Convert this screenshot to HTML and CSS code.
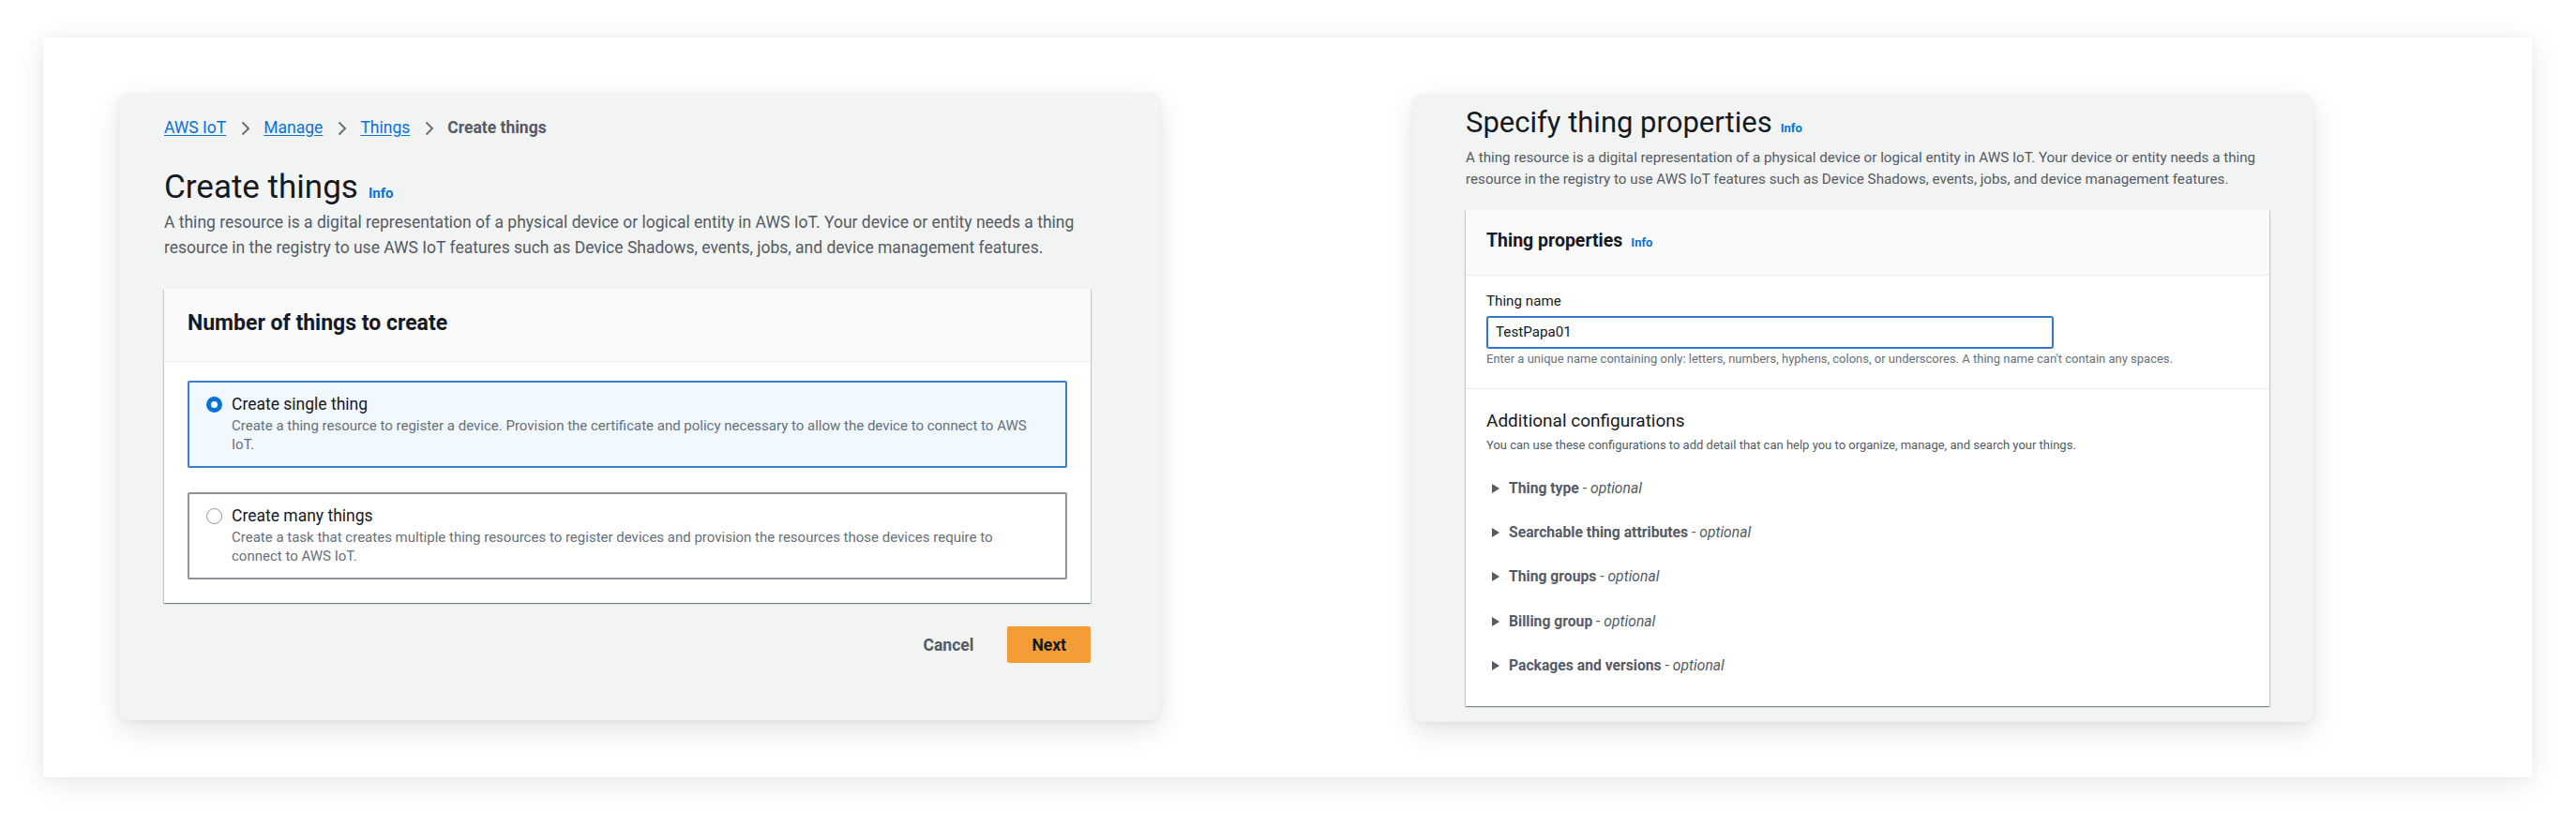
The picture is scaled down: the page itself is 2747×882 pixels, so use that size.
FILE: index.html
```html
<!DOCTYPE html>
<html lang="en">
<head>
<meta charset="utf-8">
<title>AWS IoT - Create things</title>
<link rel="stylesheet" href="styles.css">
</head>
<body>
<div class="panel">
  <section class="card card-left">
    <nav class="crumbs">
      <a href="#">AWS IoT</a>
      <svg class="chev" viewBox="0 0 11 16"><polyline points="2.5,1.5 9,8 2.5,14.5"/></svg>
      <a href="#">Manage</a>
      <svg class="chev" viewBox="0 0 11 16"><polyline points="2.5,1.5 9,8 2.5,14.5"/></svg>
      <a href="#">Things</a>
      <svg class="chev" viewBox="0 0 11 16"><polyline points="2.5,1.5 9,8 2.5,14.5"/></svg>
      <span class="current">Create things</span>
    </nav>
    <h1 class="title">Create things<a class="info" href="#">Info</a></h1>
    <p class="desc">A thing resource is a digital representation of a physical device or logical entity in AWS IoT. Your device or entity needs a thing resource in the registry to use AWS IoT features such as Device Shadows, events, jobs, and device management features.</p>
    <div class="box">
      <div class="box-head">
        <h2 class="box-title">Number of things to create</h2>
      </div>
      <div class="box-body tiles">
        <div class="tile tile-on">
          <span class="radio radio-on"></span>
          <div class="tile-text">
            <div class="tile-label">Create single thing</div>
            <div class="tile-desc">Create a thing resource to register a device. Provision the certificate and policy necessary to allow the device to connect to AWS IoT.</div>
          </div>
        </div>
        <div class="tile">
          <span class="radio"></span>
          <div class="tile-text">
            <div class="tile-label">Create many things</div>
            <div class="tile-desc">Create a task that creates multiple thing resources to register devices and provision the resources those devices require to connect to AWS IoT.</div>
          </div>
        </div>
      </div>
    </div>
    <div class="actions">
      <button class="btn btn-link" type="button">Cancel</button>
      <button class="btn btn-primary" type="button">Next</button>
    </div>
  </section>

  <section class="card card-right">
    <h1 class="title title-sm">Specify thing properties<a class="info info-sm" href="#">Info</a></h1>
    <p class="desc desc-sm">A thing resource is a digital representation of a physical device or logical entity in AWS IoT. Your device or entity needs a thing resource in the registry to use AWS IoT features such as Device Shadows, events, jobs, and device management features.</p>
    <div class="box box-sm">
      <div class="box-head box-head-sm">
        <h2 class="box-title box-title-sm">Thing properties<a class="info info-sm" href="#">Info</a></h2>
      </div>
      <div class="field-section">
        <label class="field-label" for="thing-name">Thing name</label>
        <input class="field-input" id="thing-name" type="text" value="TestPapa01">
        <div class="field-hint">Enter a unique name containing only: letters, numbers, hyphens, colons, or underscores. A thing name can't contain any spaces.</div>
      </div>
      <div class="config-section">
        <h3 class="config-title">Additional configurations</h3>
        <div class="config-desc">You can use these configurations to add detail that can help you to organize, manage, and search your things.</div>
        <ul class="expanders">
          <li class="expander"><svg class="caret" viewBox="0 0 8 10"><polygon points="0,0 8,5 0,10"/></svg><span><b>Thing type</b> - <i>optional</i></span></li>
          <li class="expander"><svg class="caret" viewBox="0 0 8 10"><polygon points="0,0 8,5 0,10"/></svg><span><b>Searchable thing attributes</b> - <i>optional</i></span></li>
          <li class="expander"><svg class="caret" viewBox="0 0 8 10"><polygon points="0,0 8,5 0,10"/></svg><span><b>Thing groups</b> - <i>optional</i></span></li>
          <li class="expander"><svg class="caret" viewBox="0 0 8 10"><polygon points="0,0 8,5 0,10"/></svg><span><b>Billing group</b> - <i>optional</i></span></li>
          <li class="expander"><svg class="caret" viewBox="0 0 8 10"><polygon points="0,0 8,5 0,10"/></svg><span><b>Packages and versions</b> - <i>optional</i></span></li>
        </ul>
      </div>
    </div>
  </section>
</div>
</body>
</html>
```

FILE: styles.css
```css
* { box-sizing: border-box; }

html, body {
  margin: 0;
  padding: 0;
  background: #ffffff;
}

body {
  font-family: Roboto, "Open Sans", "Liberation Sans", sans-serif;
  color: #16191f;
  width: 2747px;
  height: 882px;
  overflow: hidden;
}

.panel {
  margin: 40px 47px 0 46px;
  height: 789px;
  background: #ffffff;
  box-shadow: 0 6px 30px rgba(0, 0, 0, 0.09), 0 0 10px rgba(0, 0, 0, 0.03);
  display: flex;
  align-items: flex-start;
  gap: 270px;
  padding: 59px 0 0 81px;
}

.card {
  flex: none;
  background: #f2f3f3;
  border-radius: 10px;
  box-shadow: 0 10px 30px rgba(0, 0, 0, 0.11), 0 2px 6px rgba(0, 0, 0, 0.05);
}

.card-left {
  width: 1110px;
  height: 669px;
  padding: 25px 74px 0 48px;
}

.card-right {
  width: 960px;
  height: 670px;
  margin-top: 1px;
  padding: 15px 47px 0 56px;
}

/* breadcrumbs */
.crumbs {
  display: flex;
  align-items: center;
  gap: 14.5px;
  height: 25px;
  font-size: 17.5px;
  line-height: 25px;
}
.crumbs a {
  color: #0972d3;
  text-decoration: underline;
  text-underline-offset: 2px;
}
.crumbs .current {
  color: #545b64;
  font-weight: 700;
}
.chev {
  width: 11px;
  height: 16px;
  fill: none;
  stroke: #687078;
  stroke-width: 2;
}

/* headings */
.title {
  margin: 33px 0 0;
  font-size: 35px;
  line-height: 36px;
  font-weight: 400;
  color: #16191f;
}
.info {
  margin-left: 11px;
  font-size: 15px;
  font-weight: 700;
  color: #0972d3;
  text-decoration: none;
}
.title-sm {
  margin-top: 0;
  font-size: 31px;
  line-height: 32px;
}
.info-sm {
  margin-left: 9px;
  font-size: 13px;
}

.desc {
  margin: 0 -30px 0 0;
  font-size: 17.5px;
  line-height: 27px;
  color: #545b64;
}
.desc-sm {
  margin: 3.5px -20px 0 0;
  font-size: 15.2px;
  line-height: 23.2px;
}

/* container */
.box {
  margin-top: 30px;
  background: #ffffff;
  box-shadow: 0 1px 1px 0 rgba(0, 28, 36, 0.3), 1px 1px 1px 0 rgba(0, 28, 36, 0.15), -1px 1px 1px 0 rgba(0, 28, 36, 0.15);
}
.box-sm {
  margin-top: 21.5px;
}
.box-head {
  background: #fafafa;
  border-bottom: 1px solid #eaeded;
  padding: 22px 25px 25px;
}
.box-head-sm {
  padding: 20px 22px 21px;
}
.box-title {
  margin: 0;
  font-size: 23px;
  line-height: 30px;
  font-weight: 700;
  color: #16191f;
}
.box-title-sm {
  font-size: 19.5px;
  line-height: 26px;
}

.tiles {
  display: flex;
  flex-direction: column;
  gap: 26px;
  padding: 20px 25px 25px;
}
.tile {
  display: flex;
  align-items: flex-start;
  gap: 10px;
  border: 2px solid #8c939b;
  border-radius: 2px;
  padding: 12px 26px 13px 18px;
  background: #ffffff;
}
.tile-on {
  border-color: #3b7dd0;
  background: #f1f8fe;
}
.radio {
  flex: none;
  width: 17px;
  height: 17px;
  margin-top: 2.5px;
  border-radius: 50%;
  border: 1.5px solid #8d9299;
  background: #ffffff;
}
.radio-on {
  border: 5.5px solid #0972d3;
}
.tile-label {
  font-size: 17.5px;
  line-height: 22px;
  color: #16191f;
}
.tile-desc {
  margin-top: 3px;
  font-size: 15px;
  line-height: 19.5px;
  color: #687078;
}

/* actions */
.actions {
  display: flex;
  justify-content: flex-end;
  gap: 10px;
  margin-top: 25px;
}
.btn {
  height: 39px;
  padding: 0 26px;
  border: none;
  border-radius: 2px;
  font-family: inherit;
  font-size: 17.5px;
  font-weight: 700;
  background: transparent;
}
.btn-link {
  color: #545b64;
}
.btn-primary {
  background: #f49d37;
  color: #16191f;
}

/* right card sections */
.field-section {
  padding: 17px 22px 23px;
  border-bottom: 1px solid #eaeded;
}
.field-label {
  display: block;
  font-size: 15.2px;
  line-height: 20px;
  color: #16191f;
}
.field-input {
  display: block;
  margin-top: 5.5px;
  width: 605px;
  height: 35px;
  padding: 0 8px;
  border: 2px solid #2f78cc;
  border-radius: 3px;
  font-family: inherit;
  font-size: 15.2px;
  color: #16191f;
  background: #ffffff;
  outline: none;
}
.field-hint {
  margin-top: 2.5px;
  font-size: 13px;
  line-height: 17px;
  color: #687078;
}

.config-section {
  padding: 22px 22px 20px;
}
.config-title {
  margin: 0;
  font-size: 19px;
  line-height: 24px;
  font-weight: 400;
  color: #16191f;
}
.config-desc {
  margin-top: 4.5px;
  font-size: 13px;
  line-height: 17px;
  color: #545b64;
}
.expanders {
  list-style: none;
  margin: 14.5px 0 0;
  padding: 0;
}
.expander {
  display: flex;
  align-items: center;
  gap: 10px;
  padding: 13.6px 0 13.6px 6px;
  font-size: 15.7px;
  line-height: 20px;
  color: #545b64;
}
.expander b {
  font-weight: 700;
}
.expander i {
  font-style: italic;
}
.caret {
  flex: none;
  width: 8px;
  height: 10px;
  fill: #545b64;
}
```
